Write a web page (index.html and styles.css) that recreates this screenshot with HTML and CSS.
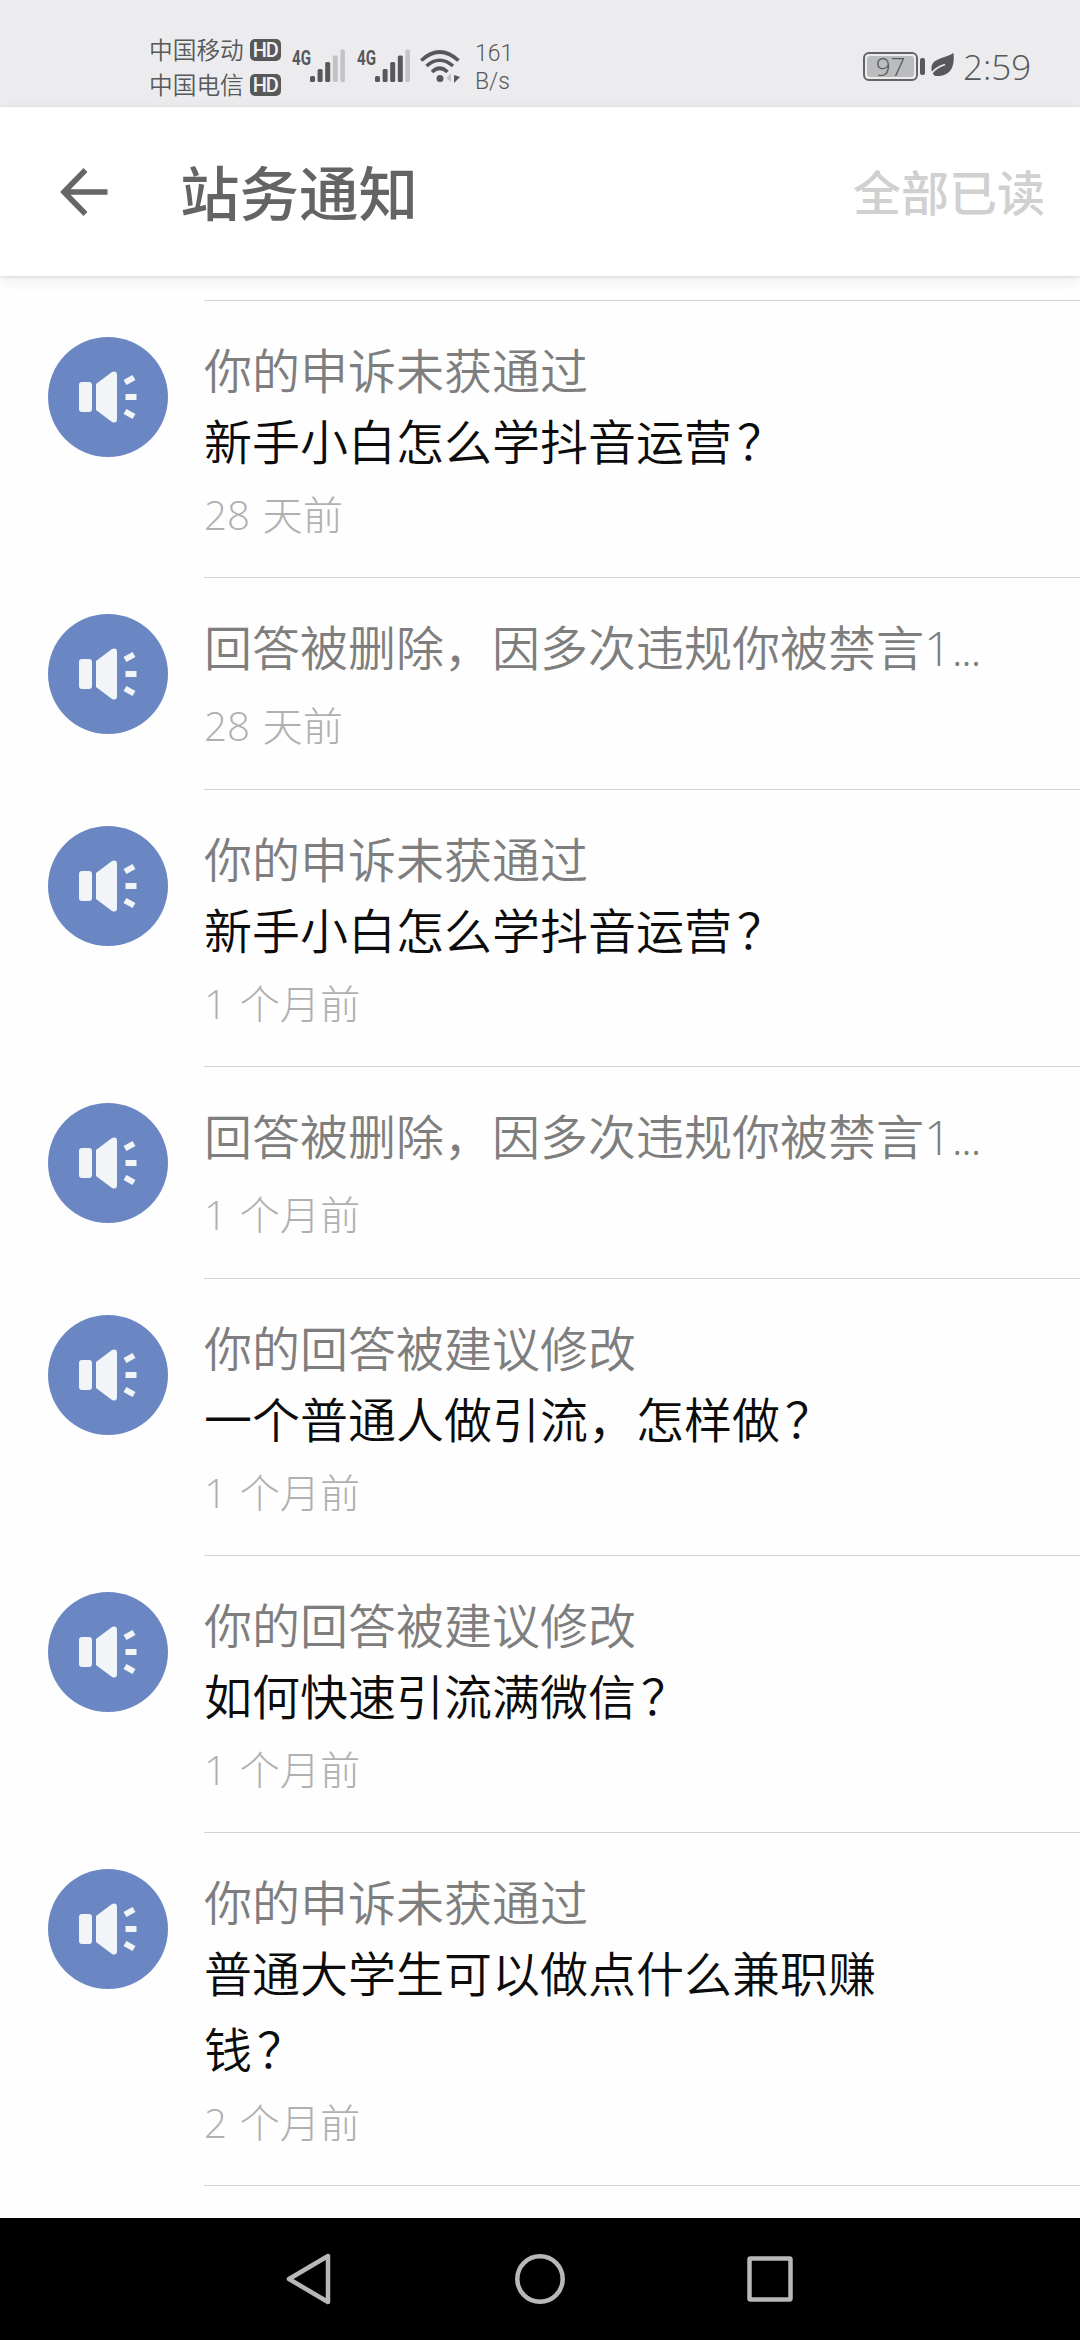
FILE: index.html
```html
<!DOCTYPE html>
<html lang="zh-CN">
<head>
<meta charset="utf-8">
<title>站务通知</title>
<link rel="stylesheet" href="styles.css">
</head>
<body>
<svg class="defs" aria-hidden="true">
  <symbol id="speaker" viewBox="0 0 120 120">
    <circle cx="60" cy="60" r="60" fill="#6a87c3"/>
    <g fill="#f1f5f8">
      <rect x="31" y="45" width="13" height="30" rx="3"/>
      <path d="M48 47 L64 35 Q69 33 69 38 V82 Q69 87 64 85 L48 73 Z"/>
    </g>
    <g stroke="#f1f5f8" stroke-width="6">
      <path d="M77 45.500 L86 40.500 M77.500 60 H88.500 M77 74.500 L86 79.500"/>
    </g>
  </symbol>
</svg>
<header class="status">
  <div class="carriers">
    <div class="carrier">中国移动<span class="hd">HD</span></div>
    <div class="carrier">中国电信<span class="hd">HD</span></div>
  </div>
  <div class="signal"><span class="net">4G</span>
    <svg width="36" height="34" viewBox="0 0 36 34"><g fill="#575859"><rect x="0" y="27" width="5" height="6" rx="1.500"/><rect x="7.600" y="20" width="5" height="13" rx="1.500"/><rect x="15.200" y="13" width="5" height="20" rx="1.500"/></g><g fill="#c2c3c4"><rect x="22.800" y="6.500" width="5" height="26.500" rx="1.500"/><rect x="30.400" y="0.500" width="4.500" height="32.500" rx="1.500"/></g></svg>
  </div>
  <div class="signal"><span class="net">4G</span>
    <svg width="36" height="34" viewBox="0 0 36 34"><g fill="#575859"><rect x="0" y="27" width="5" height="6" rx="1.500"/><rect x="7.600" y="20" width="5" height="13" rx="1.500"/><rect x="15.200" y="13" width="5" height="20" rx="1.500"/><rect x="22.800" y="6.500" width="5" height="26.500" rx="1.500"/></g><rect x="30.400" y="0.500" width="4.500" height="32.500" rx="1.500" fill="#c2c3c4"/></svg>
  </div>
  <svg class="wifi" width="42" height="34" viewBox="0 0 42 34">
    <g fill="none" stroke="#575859" stroke-width="3.600">
      <path d="M1.200 10.500 Q19.500 -6.500 38.500 10.500"/>
      <path d="M6.500 16 Q19.500 4.500 33 16"/>
      <path d="M12 22 Q19.500 14.500 27.500 22"/>
    </g>
    <circle cx="20" cy="28.500" r="3.500" fill="#575859"/>
    <path d="M26.500 28 L31 23 V32 Z" fill="#c2c3c4"/>
    <path d="M34 25 L40 27 L34 33 Z" fill="#575859"/>
  </svg>
  <div class="speed"><span>161</span><span>B/s</span></div>
  <div class="battery"><span class="level">97</span></div>
  <svg class="leaf" width="24" height="26" viewBox="0 0 24 26">
    <path d="M22.500 1 C24 14 20 23 8.500 24 L4 24 C1.500 22 0 19 0.500 16 C1 6 13 7 22.500 1 Z" fill="#575859"/>
    <path d="M0.500 21.500 Q4 16 14 12.500" fill="none" stroke="#ececee" stroke-width="1.800"/>
  </svg>
  <div class="clock">2:59</div>
</header>
<div class="appbar">
  <svg class="back" width="48" height="50" viewBox="0 0 48 50"><path d="M25.500 3 L4 25 L25.500 47 M4 25 H47.500" fill="none" stroke="#666" stroke-width="5.600"/></svg>
  <h1 class="heading">站务通知</h1>
  <button class="readall">全部已读</button>
</div>
<main class="list">
  <article class="item"><svg class="avatar"><use href="#speaker"/></svg><div class="body"><p class="kind">你的申诉未获通过</p><p class="question">新手小白怎么学抖音运营<span class="mark">？</span></p><p class="time">28 天前</p></div></article>
  <article class="item"><svg class="avatar"><use href="#speaker"/></svg><div class="body"><p class="kind">回答被删除，因多次违规你被禁言<span class="latin">1<span class="dots">...</span></span></p><p class="time alone">28 天前</p></div></article>
  <article class="item"><svg class="avatar"><use href="#speaker"/></svg><div class="body"><p class="kind">你的申诉未获通过</p><p class="question">新手小白怎么学抖音运营<span class="mark">？</span></p><p class="time">1 个月前</p></div></article>
  <article class="item"><svg class="avatar"><use href="#speaker"/></svg><div class="body"><p class="kind">回答被删除，因多次违规你被禁言<span class="latin">1<span class="dots">...</span></span></p><p class="time alone">1 个月前</p></div></article>
  <article class="item"><svg class="avatar"><use href="#speaker"/></svg><div class="body"><p class="kind">你的回答被建议修改</p><p class="question">一个普通人做引流，怎样做<span class="mark">？</span></p><p class="time">1 个月前</p></div></article>
  <article class="item"><svg class="avatar"><use href="#speaker"/></svg><div class="body"><p class="kind">你的回答被建议修改</p><p class="question">如何快速引流满微信<span class="mark">？</span></p><p class="time">1 个月前</p></div></article>
  <article class="item"><svg class="avatar"><use href="#speaker"/></svg><div class="body"><p class="kind">你的申诉未获通过</p><p class="question">普通大学生可以做点什么兼职赚<br>钱<span class="mark">？</span></p><p class="time">2 个月前</p></div></article>
  <div class="next"></div>
</main>
<nav class="navbar">
  <svg width="50" height="54" viewBox="0 0 50 54"><path d="M44 4 V50 L5 27 Z"/></svg>
  <svg width="54" height="54" viewBox="0 0 54 54"><circle cx="27" cy="27" r="22.700"/></svg>
  <svg width="50" height="54" viewBox="0 0 50 54"><rect x="4.500" y="6.500" width="41" height="41" rx="1"/></svg>
</nav>
</body>
</html>
```
FILE: styles.css
```css
* { box-sizing: border-box; }
body {
  margin: 0;
  width: 1080px;
  height: 2340px;
  overflow: hidden;
  display: flex;
  flex-direction: column;
  background: #fefefe;
  font-family: "Open Sans", "Noto Sans CJK SC", sans-serif;
}
p, h1 { margin: 0; }
.defs { display: none; }

.status {
  flex: none;
  height: 107px;
  padding: 32px 52px 0 149px;
  display: flex;
  align-items: flex-start;
  background: #ececee;
  color: #575859;
}
.carriers { width: 143px; }
.carrier {
  height: 35px;
  font: 350 23.7px/35px "Noto Sans CJK SC", sans-serif;
  display: flex;
  align-items: center;
}
.hd {
  width: 31px;
  height: 22px;
  margin-left: 6px;
  border-radius: 5px;
  background: #575859;
  color: #f2f2f3;
  font: 500 20px/22px "Roboto", sans-serif;
  letter-spacing: -1px;
  text-align: center;
}
.signal { width: 65px; display: flex; padding-top: 17px; }
.net {
  width: 18px;
  font: 700 21px/18px "Roboto", sans-serif;
  transform: scaleX(.72);
  transform-origin: left;
}
.wifi { margin-top: 18px; margin-left: -2px; }
.speed {
  margin-left: 13px;
  display: flex;
  flex-direction: column;
  font: 350 23px/28px "Roboto", sans-serif;
  padding-top: 8px;
}
.battery {
  margin: 20px 0 0 auto;
  width: 55px;
  height: 29px;
  border: 2px solid #636465;
  border-radius: 6px;
  padding: 2px;
  position: relative;
}
.battery::after {
  content: "";
  position: absolute;
  left: 55px;
  top: 4px;
  width: 5px;
  height: 17px;
  border-radius: 2px;
  background: #575859;
}
.level {
  display: block;
  height: 21px;
  border-radius: 3px;
  background: #bbbcbd;
  font: 300 26px/21px "Open Sans", sans-serif;
  text-align: center;
}
.leaf { margin: 20px 0 0 13px; }
.clock {
  margin-left: 8px;
  font-size: 35px;
  font-weight: 300;
  line-height: 40px;
  padding-top: 15px;
  width: 65px;
}

.appbar {
  flex: none;
  height: 169px;
  padding: 0 35px 3px 60px;
  display: flex;
  align-items: center;
  background: #fff;
  box-shadow: 0 1px 3px rgba(0, 0, 0, .12), 0 4px 14px rgba(0, 0, 0, .07);
  z-index: 1;
}
.back { margin-top: 3px; }
.heading {
  margin-left: 72px;
  font: 500 59.500px/80px "Noto Sans CJK SC", sans-serif;
  color: #646464;
}
.readall {
  margin-left: auto;
  padding: 0;
  border: 0;
  background: none;
  font: 500 48px/60px "Noto Sans CJK SC", sans-serif;
  color: #d0d0d0;
}

.list { flex: 1; padding-top: 24px; }
.item { display: flex; padding-left: 48px; }
.avatar { width: 120px; height: 120px; margin: 37px 36px 0 0; flex: none; }
.body {
  flex: 1;
  border-top: 1px solid #d2d2d2;
  padding: 32px 0 25px;
}
.kind {
  height: 71px;
  font-size: 48px;
  line-height: 75px;
  font-weight: 350;
  color: #7e7e7e;
  white-space: nowrap;
}
.latin { font-weight: 300; }
.dots { letter-spacing: -2px; }
.question {
  font-size: 48px;
  line-height: 76px;
  font-weight: 350;
  color: #0c0c0c;
}
.mark { padding-left: 5px; }
.time {
  height: 72px;
  font-size: 40.3px;
  line-height: 70px;
  font-weight: 300;
  word-spacing: 2px;
  color: #b0b0b0;
}
.alone { height: 83px; padding-top: 10px; }
.next { margin-left: 204px; border-top: 1px solid #d2d2d2; }

.navbar {
  flex: none;
  height: 122px;
  padding: 34px 285px 0 284px;
  display: flex;
  justify-content: space-between;
  background: #000;
}
.navbar svg { fill: none; stroke: #b8b8b8; stroke-width: 4.500; stroke-linejoin: round; }
```
